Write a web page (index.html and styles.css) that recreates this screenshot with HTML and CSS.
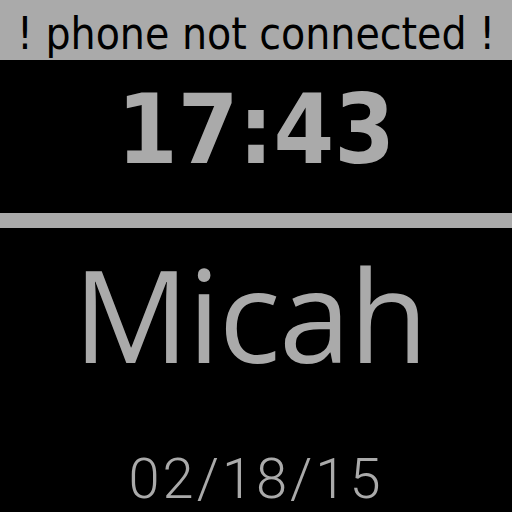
FILE: index.html
```html
<!DOCTYPE html>
<html>
<head>
<meta charset="utf-8">
<link rel="stylesheet" href="styles.css">
</head>
<body>
<div class="watch">
  <div class="status">! phone not connected !</div>
  <div class="time">17:43</div>
  <div class="rule"></div>
  <div class="name">Micah</div>
  <div class="date">02/18/15</div>
</div>
</body>
</html>
```
FILE: styles.css
```css
html, body {
  margin: 0;
  padding: 0;
  background: #000;
}
.watch {
  width: 512px;
  height: 512px;
  background: #000;
  color: #aaaaaa;
  display: flex;
  flex-direction: column;
  overflow: hidden;
}
.status {
  box-sizing: border-box;
  height: 60px;
  padding-top: 8px;
  background: #aaaaaa;
  color: #000;
  font-family: "DejaVu Sans Condensed", "DejaVu Sans", sans-serif;
  font-size: 44px;
  line-height: 52px;
  text-align: center;
  white-space: nowrap;
  overflow: visible;
}
.time {
  box-sizing: border-box;
  height: 153px;
  padding-top: 13px;
  font-family: "DejaVu Sans Condensed", "DejaVu Sans", sans-serif;
  font-weight: bold;
  font-size: 97px;
  line-height: 113px;
  text-align: center;
}
.rule {
  height: 15px;
  background: #aaaaaa;
}
.name {
  box-sizing: border-box;
  height: 160px;
  padding-top: 5px;
  padding-right: 12px;
  font-family: "Open Sans", sans-serif;
  font-size: 129px;
  line-height: 160px;
  letter-spacing: -1.5px;
  text-align: center;
}
.date {
  padding-top: 58px;
  font-family: Roboto, sans-serif;
  font-weight: 300;
  font-size: 56px;
  line-height: 66px;
  letter-spacing: 3px;
  text-align: center;
}
```
